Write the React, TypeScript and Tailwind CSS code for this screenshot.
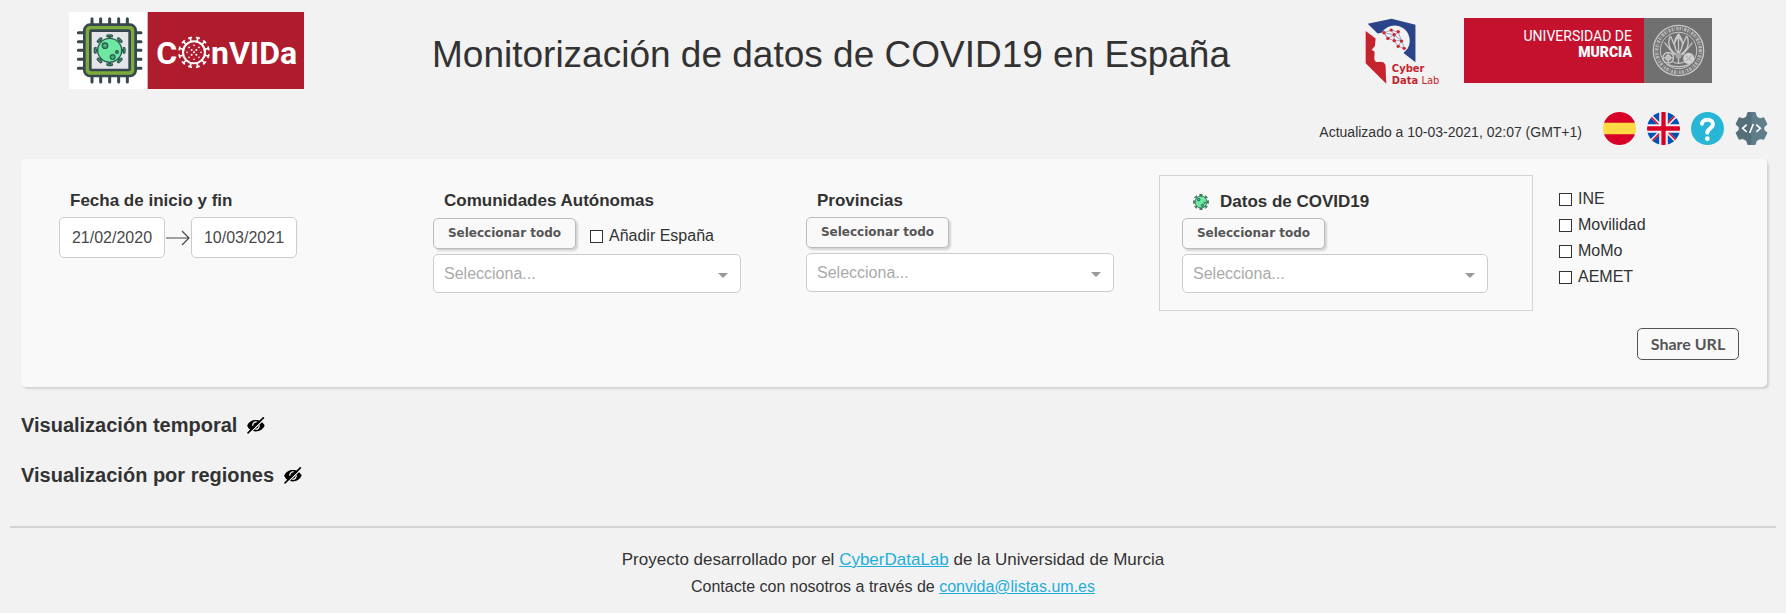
import React, { useState } from "react";

const SPOKES_8 = [0, 45, 90, 135, 180, 225, 270, 315];
const SPOKES_12 = [15, 45, 75, 105, 135, 165, 195, 225, 255, 285, 315, 345];

function VirusShape({ stroke }: { stroke: number }) {
  return (
    <g stroke="#2c5a4e" strokeWidth={stroke} fill="#6ee7a0">
      {SPOKES_8.map((a) => (
        <path key={a} d="M-2 -30 L-2 -41 L-8 -41 Q-9 -46 -5 -46 L5 -46 Q9 -46 8 -41 L2 -41 L2 -30 Z" transform={`rotate(${a})`} />
      ))}
      <circle r="36" />
      <circle cx="-14" cy="-14" r="8" fill="#43b581" />
      <circle cx="9" cy="20" r="7" fill="#43b581" />
      <circle cx="22" cy="5" r="4" fill="#43b581" />
    </g>
  );
}

function ConvidaLogo() {
  return (
    <svg viewBox="0 0 705 231" className="h-[77px] w-[235px]" role="img" aria-label="ConVIDa">
      <rect width="236" height="231" fill="#fff" />
      <rect x="236" width="469" height="231" fill="#ae1c2e" />
      <g stroke="#37474f" strokeWidth="9" strokeLinecap="round">
        {[69, 95, 122, 149, 175].map((x) => (
          <path key={x} d={`M${x} 20V40M${x} 194V210`} />
        ))}
        {[62, 89, 115, 142, 169].map((y) => (
          <path key={y} d={`M28 ${y}H48M200 ${y}H216`} />
        ))}
      </g>
      <rect x="46" y="38" width="154" height="154" rx="17" fill="#7cab3b" stroke="#37474f" strokeWidth="8" />
      <rect x="64" y="56" width="118" height="118" rx="3" fill="#e3e5e8" stroke="#37474f" strokeWidth="8" />
      <g transform="translate(122 115)">
        <VirusShape stroke={4} />
      </g>
      <g fill="#fff" fontFamily="Roboto, sans-serif" fontWeight="700" fontSize="96">
        <text x="262" y="155">C</text>
        <text x="426" y="155">nVIDa</text>
      </g>
      <g transform="translate(375 121)" stroke="#fff" fill="none" strokeWidth="5">
        {SPOKES_12.map((a) => (
          <path key={a} d="M0 -34V-45M-6 -45H6" transform={`rotate(${a})`} />
        ))}
        <circle r="33" strokeWidth="6" />
        <g fill="#fff" stroke="none">
          {SPOKES_8.map((a) => (
            <circle key={a} cy="-21" r="2.5" transform={`rotate(${a})`} />
          ))}
          {[0, 90, 180, 270].map((a) => (
            <circle key={a} cy="-10" r="3" transform={`rotate(${a + 45})`} />
          ))}
          <circle r="3" />
        </g>
      </g>
    </svg>
  );
}

function CyberDataLabLogo() {
  return (
    <svg viewBox="46 36 232 201" className="h-[67px] w-[77px] overflow-visible" role="img" aria-label="Cyber Data Lab">
      <path d="M54 53L126 38L198 56V169L162 141L174 128A42 42 0 0 0 96 80L84 82Z" fill="#2b4389" />
      <path d="M48 75L78 97L76 120L66 131L75 137L74 158Q76 170 86 168Q104 166 108 178L110 234L48 172Z" fill="#c5242f" />
      <path d="M103 80L125 72L146 78L156 104L165 127L146 121L134 104L115 97Z M103 80L134 86L146 78M125 72L134 86L134 104L156 104M115 97L134 86L156 104L146 121M103 80L115 97" fill="none" stroke="#7080ad" strokeWidth="2" />
      <g fill="#d2232f">
        {[[103, 80], [125, 72], [146, 77], [134, 86], [115, 97], [134, 104], [156, 105], [146, 121], [164, 127]].map(([x, y]) => (
          <circle key={`${x}-${y}`} cx={x} cy={y} r="5" />
        ))}
      </g>
      <g fill="#c5242f" fontFamily="'DejaVu Sans', sans-serif" fontSize="30" fontWeight="700">
        <text x="127" y="198">Cyber</text>
        <text x="127" y="233">Data</text>
        <text x="216" y="233" fontWeight="400">Lab</text>
      </g>
    </svg>
  );
}

function Seal() {
  return (
    <svg viewBox="-80 -80 160 160" className="size-[53px]" aria-hidden="true">
      <g fill="none" stroke="#c9c9c9">
        <circle r="76" strokeWidth="4" />
        <circle r="66" strokeWidth="11" strokeDasharray="5 3 2 4 7 3" stroke="#b3b3b3" />
        <circle r="55" strokeWidth="3" />
        <path d="M0 -50C-16 -30 -16 -10 0 10C16 -10 16 -30 0 -50ZM-26 -42C-34 -20 -26 0 -4 14M26 -42C34 -20 26 0 4 14M-42 -24L-12 14M42 -24L12 14M0 -44V38M-24 -44L-14 -20L0 -44L14 -20L24 -44" strokeWidth="4" />
        <circle cx="-31" cy="22" r="16" strokeWidth="4" />
        <circle cx="-31" cy="22" r="7" strokeWidth="4" />
        <path d="M-47 22H-15M-31 6V38M-34 42Q0 56 34 42M-18 34Q0 44 18 34" strokeWidth="4" />
      </g>
      <circle cx="31" cy="24" r="17" fill="#d0d0d0" />
      <path d="M22 16L40 32M22 32L40 16" stroke="#a5a5a5" strokeWidth="3" />
      <circle cy="16" r="9" fill="#a9a9a9" />
    </svg>
  );
}

function MurciaLogo() {
  return (
    <div className="flex h-[65px] w-[248px] font-[Roboto,sans-serif] text-white">
      <div className="flex flex-1 flex-col items-end bg-[#c4122e] pt-[10px] pr-3 text-[14px] leading-4">
        <span>UNIVERSIDAD DE</span>
        <span className="font-black">MURCIA</span>
      </div>
      <div className="flex w-[68px] items-center justify-center bg-[#707070]">
        <Seal />
      </div>
    </div>
  );
}

function SpainFlag() {
  return (
    <svg viewBox="0 0 512 512" className="size-[33px]" aria-hidden="true">
      <path d="M0 256c0 31.300 5.600 61.300 15.900 89L256 367.300l240.100-22.300c10.300-27.700 15.900-57.700 15.900-89s-5.600-61.300-15.900-89L256 144.700 15.900 167C5.600 194.700 0 224.700 0 256z" fill="#ffda44" />
      <path d="M496.100 167C459.900 69.500 366.100 0 256 0S52.100 69.500 15.900 167zM15.900 345C52.100 442.500 145.900 512 256 512s203.900-69.500 240.100-167z" fill="#d80027" />
    </svg>
  );
}

function UkFlag() {
  return (
    <svg viewBox="0 0 512 512" className="size-[33px]" aria-hidden="true">
      <clipPath id="uk-disc">
        <circle cx="256" cy="256" r="256" />
      </clipPath>
      <g clipPath="url(#uk-disc)">
        <rect width="512" height="512" fill="#f0f0f0" />
        <path d="M189 0V156L33 0ZM0 33L156 189H0ZM323 0V156L479 0ZM512 33L356 189H512ZM189 512V356L33 512ZM0 479L156 323H0ZM323 512V356L479 512ZM512 479L356 323H512Z" fill="#0052b4" />
        <path d="M223 0H289V223H512V289H289V512H223V289H0V223H223Z" fill="#d80027" />
        <path d="M323 323L453 453L469 437L355 323ZM189 323L59 453L75 469L189 355ZM189 189L59 59L43 75L157 189ZM323 189L453 59L437 43L323 157Z" fill="#d80027" />
      </g>
    </svg>
  );
}

function HelpIcon() {
  return (
    <svg viewBox="0 0 99 99" className="size-[33px]" aria-hidden="true">
      <circle cx="49.500" cy="49.500" r="49.500" fill="#27b6d6" />
      <path d="M33 35C34 19 66 19 66 37C66 49 49 49 49 62" fill="none" stroke="#fff" strokeWidth="12" strokeLinecap="round" />
      <circle cx="49" cy="80" r="7" fill="#fff" />
    </svg>
  );
}

function GearCodeIcon() {
  return (
    <svg viewBox="0 0 99 99" className="size-[33px]" aria-hidden="true">
      <path d="M39 2H60L64 15L75 21L86 18L95 36L86 45V55L95 63L86 81L75 79L64 85L60 97H39L35 85L24 79L13 81L4 63L13 55V45L4 36L13 18L24 21L35 15Z" fill="#607d8b" stroke="#607d8b" strokeWidth="4" strokeLinejoin="round" />
      <path d="M49 1H39L35 15L24 21L12 17L3 36L12 45V55L3 63L12 82L24 79L35 85L39 98H49Z" fill="#546e7a" />
      <path d="M35 38L23 49L35 60M64 38L76 49L64 60M55 36L44 63" fill="none" stroke="#fff" strokeWidth="5" />
    </svg>
  );
}

function HiddenIcon() {
  return (
    <svg viewBox="0 0 54 52" className="h-[17px] w-[18px]" aria-hidden="true">
      <path d="M0 27C8 3 44 3 53 26C45 50 9 50 0 27Z" fill="#000" />
      <path d="M17 27Q17 15 29 14M37 25Q37 37 25 38" fill="none" stroke="#f2f2f2" strokeWidth="4" />
      <path d="M5 52L54 5" stroke="#f2f2f2" strokeWidth="4" />
      <path d="M1 50L51 1" stroke="#000" strokeWidth="5" />
    </svg>
  );
}

function SelectAllButton() {
  return (
    <button
      type="button"
      className="h-[31px] w-[143px] shrink-0 rounded-[5px] border border-[#bbb] bg-[#f9f9f9] pb-px font-['DejaVu_Sans',sans-serif] text-[12px] font-bold text-[#555] shadow-[2px_2px_2px_#d3d3d3]"
    >
      Seleccionar todo
    </button>
  );
}

function Picker({ id }: { id: string }) {
  return (
    <div className="relative max-w-[308px]">
      <select
        id={id}
        defaultValue=""
        className="h-[39px] w-full appearance-none rounded-[5px] border border-[#ccc] bg-white pl-[10px] text-[16px] text-[#aaa]"
      >
        <option value="">Selecciona...</option>
      </select>
      <svg viewBox="0 0 10 5" className="pointer-events-none absolute top-[19px] right-[13px] h-[5px] w-[10px]" aria-hidden="true">
        <path d="M0 0H10L5 5Z" fill="#999" />
      </svg>
    </div>
  );
}

function Check({ label }: { label: string }) {
  return (
    <label className="flex items-center gap-[6px] text-[16px] leading-[26px]">
      <input type="checkbox" className="size-[13px] appearance-none border border-[#333] bg-white checked:bg-[#333]" />
      {label}
    </label>
  );
}

function DateField({ label, initial }: { label: string; initial: string }) {
  const [value, setValue] = useState(initial);
  return (
    <input
      aria-label={label}
      value={value}
      onChange={(e) => setValue(e.target.value)}
      className="h-[41px] w-[106px] rounded-[5px] border border-[#ccc] bg-white pt-px text-center text-[16px] text-[#484848]"
    />
  );
}

const labelStyle = "block pl-[11px] text-[17px] leading-[18px] font-bold";

export default function App() {
  return (
    <div className="min-h-screen bg-[#f2f2f2] font-['Liberation_Sans',Arial,sans-serif] text-[#323232]">
      <header className="flex items-start pt-3 pr-[74px] pl-[69px]">
        <ConvidaLogo />
        <h1 className="ml-32 pt-[22px] text-[37px] leading-[42px]">Monitorización de datos de COVID19 en España</h1>
        <div className="ml-auto flex gap-[22px] pt-[6px]">
          <CyberDataLabLogo />
          <MurciaLogo />
        </div>
      </header>

      <div className="mt-[23px] flex h-[33px] items-center justify-end gap-[11px] pr-[18px]">
        <p className="mr-[10px] pt-2 text-[14px]">Actualizado a 10-03-2021, 02:07 (GMT+1)</p>
        <button type="button" aria-label="Español"><SpainFlag /></button>
        <button type="button" aria-label="English"><UkFlag /></button>
        <button type="button" aria-label="Ayuda"><HelpIcon /></button>
        <button type="button" aria-label="API"><GearCodeIcon /></button>
      </div>

      <section className="mt-[14px] mr-[19px] ml-[21px] rounded-[5px] bg-[#f9f9f9] pt-4 pr-7 pb-[27px] pl-[38px] shadow-[2px_2px_2px_#d3d3d3]">
        <div className="grid grid-cols-[374fr_373fr_353fr_400fr_180fr] items-start">
          <div className="pt-[17px]">
            <span className={labelStyle}>Fecha de inicio y fin</span>
            <div className="mt-[7px] flex items-center">
              <DateField label="Fecha de inicio" initial="21/02/2020" />
              <svg viewBox="0 0 26 16" className="h-4 w-[26px]" fill="none" stroke="#484848" aria-hidden="true">
                <path d="M1 8H24M17 1L24 8L17 15" strokeWidth="1.200" />
              </svg>
              <DateField label="Fecha de fin" initial="10/03/2021" />
            </div>
          </div>

          <div className="pt-[17px]">
            <label htmlFor="comunidades" className={labelStyle}>Comunidades Autónomas</label>
            <div className="mt-[7px] mb-[5px] flex items-center gap-[14px]">
              <SelectAllButton />
              <div className="pt-[6px]"><Check label="Añadir España" /></div>
            </div>
            <Picker id="comunidades" />
          </div>

          <div className="pt-[17px]">
            <label htmlFor="provincias" className={labelStyle}>Provincias</label>
            <div className="mt-[7px] mb-[5px] flex"><SelectAllButton /></div>
            <Picker id="provincias" />
          </div>

          <div className="mr-[26px] border border-[#d3d3d3] pt-[17px] pr-11 pb-[17px] pl-[22px]">
            <div className="flex items-center pl-[11px]">
              <svg viewBox="-48 -48 96 96" className="size-4" aria-hidden="true">
                <VirusShape stroke={5} />
              </svg>
              <label htmlFor="covid" className={labelStyle}>Datos de COVID19</label>
            </div>
            <div className="mt-[7px] mb-[5px] flex"><SelectAllButton /></div>
            <Picker id="covid" />
          </div>

          <div className="pt-[11px]">
            <Check label="INE" />
            <Check label="Movilidad" />
            <Check label="MoMo" />
            <Check label="AEMET" />
          </div>
        </div>

        <div className="mt-[17px] flex justify-end">
          <button type="button" className="h-8 w-[102px] rounded-[5px] border border-[#555] bg-[#f9f9f9] font-[Lato,sans-serif] text-[16px] font-bold text-[#555]">
            Share URL
          </button>
        </div>
      </section>

      <main className="px-[21px] pt-[26px] text-[20px] leading-6">
        <div className="flex items-center gap-[10px]">
          <h2 className="font-bold">Visualización temporal</h2>
          <button type="button" aria-label="Mostrar visualización temporal"><HiddenIcon /></button>
        </div>
        <div className="mt-[26px] flex items-center gap-[10px]">
          <h2 className="font-bold">Visualización por regiones</h2>
          <button type="button" aria-label="Mostrar visualización por regiones"><HiddenIcon /></button>
        </div>
      </main>

      <footer className="mx-[10px] mt-[39px] border-t-2 border-[#d3d3d3] pt-[18px] text-center text-[16px] leading-[27px]">
        <p className="text-[17px]">
          Proyecto desarrollado por el <a href="#cyberdatalab" className="text-[#1eaedb] underline">CyberDataLab</a> de la Universidad de Murcia
        </p>
        <p>
          Contacte con nosotros a través de <a href="mailto:convida@listas.um.es" className="text-[#1eaedb] underline">convida@listas.um.es</a>
        </p>
      </footer>
    </div>
  );
}
